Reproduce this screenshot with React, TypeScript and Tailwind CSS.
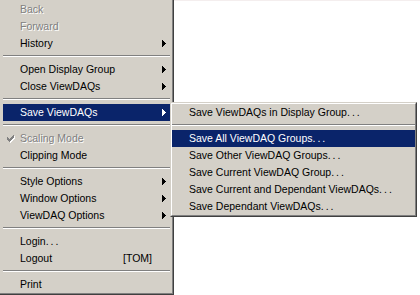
import React from 'react';

type Entry =
  | { sep: true }
  | {
      sep?: false;
      label: string;
      disabled?: boolean;
      sub?: boolean;
      checked?: boolean;
      active?: boolean;
      hint?: string;
    };

const mainItems: Entry[] = [
  { label: 'Back', disabled: true },
  { label: 'Forward', disabled: true },
  { label: 'History', sub: true },
  { sep: true },
  { label: 'Open Display Group', sub: true },
  { label: 'Close ViewDAQs', sub: true },
  { sep: true },
  { label: 'Save ViewDAQs', sub: true, active: true },
  { sep: true },
  { label: 'Scaling Mode', disabled: true, checked: true },
  { label: 'Clipping Mode' },
  { sep: true },
  { label: 'Style Options', sub: true },
  { label: 'Window Options', sub: true },
  { label: 'ViewDAQ Options', sub: true },
  { sep: true },
  { label: 'Login...' },
  { label: 'Logout', hint: '[TOM]' },
  { sep: true },
  { label: 'Print' },
];

const saveItems: Entry[] = [
  { label: 'Save ViewDAQs in Display Group...' },
  { sep: true },
  { label: 'Save All ViewDAQ Groups...', active: true },
  { label: 'Save Other ViewDAQ Groups...' },
  { label: 'Save Current ViewDAQ Group...' },
  { label: 'Save Current and Dependant ViewDAQs...' },
  { label: 'Save Dependant ViewDAQs...' },
];

// 7x7 pixel check mark, like the classic Windows menu glyph
const checkPixels = [
  [6, 0, 1], [5, 1, 2], [0, 2, 1], [4, 2, 3], [0, 3, 2], [3, 3, 3],
  [0, 4, 5], [1, 5, 3], [2, 6, 1],
];

const CheckMark: React.FC<{ disabled?: boolean }> = ({ disabled }) => (
  <svg width="8" height="8" viewBox="0 0 8 8" shapeRendering="crispEdges" className="absolute left-[4px] top-[5px]">
    {disabled &&
      checkPixels.map(([x, y, w], i) => (
        <rect key={'s' + i} x={x + 1} y={y + 1} width={w} height={1} fill="#ffffff" />
      ))}
    {checkPixels.map(([x, y, w], i) => (
      <rect key={i} x={x} y={y} width={w} height={1} fill={disabled ? '#808080' : '#000000'} />
    ))}
  </svg>
);

const Arrow: React.FC<{ color: string }> = ({ color }) => (
  <svg width="4" height="7" viewBox="0 0 4 7" shapeRendering="crispEdges" className="ml-auto mr-[4px]">
    <rect x="0" y="0" width="1" height="7" fill={color} />
    <rect x="1" y="1" width="1" height="5" fill={color} />
    <rect x="2" y="2" width="1" height="3" fill={color} />
    <rect x="3" y="3" width="1" height="1" fill={color} />
  </svg>
);

// Tahoma's ellipsis dots sit wider apart than Arial's
const Label: React.FC<{ text: string }> = ({ text }) => {
  if (!text.endsWith('...')) return <span>{text}</span>;
  return (
    <span>
      {text.slice(0, -3)}
      <span className="tracking-[2px]">...</span>
    </span>
  );
};

const MenuRow: React.FC<{ entry: Entry }> = ({ entry }) => {
  if (entry.sep) {
    return (
      <div className="h-[9px] pt-[3px]">
        <div className="h-px bg-[#808080]"></div>
        <div className="h-px bg-white"></div>
      </div>
    );
  }

  const textColor = entry.active
    ? 'text-white'
    : entry.disabled
      ? 'text-[#808080] [text-shadow:1px_1px_0_#ffffff]'
      : 'text-black';

  return (
    <div
      className={`relative flex items-center h-[17px] pl-[17px] leading-[17px] whitespace-nowrap ${
        entry.active ? 'bg-[#0a246a]' : ''
      } ${textColor}`}
    >
      {entry.checked && <CheckMark disabled={entry.disabled} />}
      <Label text={entry.label} />
      {entry.hint && <span className="ml-auto mr-[18px]">{entry.hint}</span>}
      {entry.sub && <Arrow color={entry.active ? '#ffffff' : '#000000'} />}
    </div>
  );
};

export default function App() {
  return (
    <div className="relative flex w-[420px] h-[295px] overflow-hidden bg-white font-['Liberation_Sans',Arial,sans-serif] text-[10.5px]">
      {/* main context menu, cropped on the left and top */}
      <div className="w-[174px] h-[295px] shrink-0 bg-[#d4d0c8] border-r border-b border-[#404040]">
        <div className="h-full border-r border-b border-[#808080] pt-px pl-[3px] pr-[2px]">
          {mainItems.map((e, i) => (
            <MenuRow key={i} entry={e} />
          ))}
        </div>
      </div>

      {/* window behind the menu */}
      <div className="flex-1 h-full bg-white border-t border-[#f4eeee]"></div>

      {/* Save ViewDAQs submenu */}
      <div className="absolute left-[170px] top-[102px] w-[247px] bg-[#d4d0c8] border border-t-[#d4d0c8] border-l-[#d4d0c8] border-r-[#404040] border-b-[#404040]">
        <div className="border border-t-white border-l-white border-r-[#808080] border-b-[#808080]">
          {saveItems.map((e, i) => (
            <MenuRow key={i} entry={e} />
          ))}
        </div>
      </div>
    </div>
  );
}
